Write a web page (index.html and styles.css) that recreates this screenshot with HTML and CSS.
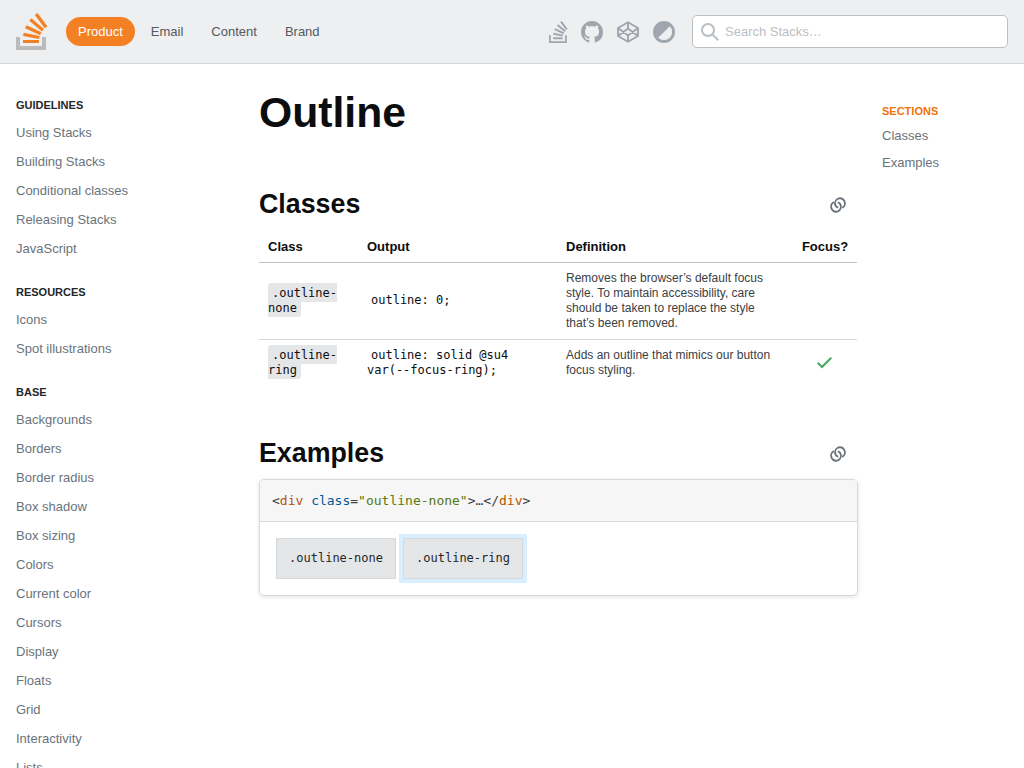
FILE: index.html
```html
<!DOCTYPE html>
<html lang="en">
<head>
<meta charset="utf-8">
<title>Outline - Stacks</title>
<link rel="stylesheet" href="styles.css">
</head>
<body>
<svg class="defs" width="0" height="0">
  <symbol id="icon-link" viewBox="0 0 18 18">
    <path d="M13.2 11.9A4.9 5.1 0 1 0 6.6 9.6Q7.4 11.3 9.3 11.6M4.8 6.1A4.9 5.1 0 1 0 11.4 8.4Q10.6 6.7 8.7 6.4" fill="none" stroke="currentColor" stroke-width="1.9"/>
  </symbol>
</svg>
<header class="topbar">
  <a class="logo"><svg width="32" height="37" viewBox="0 0 32 37"><path fill="#bcbbbb" d="M26 33v-9h4v13H0V24h4v9h22Z"/><path fill="#f48024" d="m21.5 0-2.7 2 9.9 13.3 2.7-2L21.5 0ZM26 18.4 13.3 7.8l2.1-2.5 12.7 10.6-2.1 2.5ZM9.1 15.2l15 7 1.4-3-15-7-1.4 3Zm14 10.79.68-2.95-16.1-3.35L7 23l16.1 2.99ZM23 30H7v-3h16v3Z"/></svg></a>
  <nav class="nav">
    <a class="nav-item selected">Product</a>
    <a class="nav-item">Email</a>
    <a class="nav-item">Content</a>
    <a class="nav-item">Brand</a>
  </nav>
  <div class="tools">
    <svg width="19" height="22" viewBox="0 0 31.95 37"><path d="M27 34v-10h3v13H0V24h3v10h24Z"/><path d="m21.5 0-2.7 2 9.9 13.3 2.7-2L21.5 0ZM26 18.4 13.3 7.8l2.1-2.5 12.7 10.6-2.1 2.5ZM9.1 15.2l15 7 1.4-3-15-7-1.4 3Zm14 10.79.68-2.95-16.1-3.35L7 23l16.1 2.99ZM23 30.5H7v-3h16v3Z"/></svg>
    <svg width="22" height="22" viewBox="0 0 16 16"><path d="M8 0C3.58 0 0 3.58 0 8c0 3.54 2.29 6.53 5.47 7.59.4.07.55-.17.55-.38 0-.19-.01-.82-.01-1.49-2.01.37-2.53-.49-2.69-.94-.09-.23-.48-.94-.82-1.13-.28-.15-.68-.52-.01-.53.63-.01 1.08.58 1.23.82.72 1.21 1.87.87 2.33.66.07-.52.28-.87.51-1.07-1.78-.2-3.64-.89-3.64-3.95 0-.87.31-1.59.82-2.15-.08-.2-.36-1.02.08-2.12 0 0 .67-.21 2.2.82.64-.18 1.32-.27 2-.27s1.36.09 2 .27c1.53-1.04 2.2-.82 2.2-.82.44 1.1.16 1.92.08 2.12.51.56.82 1.27.82 2.15 0 3.07-1.87 3.75-3.65 3.95.29.25.54.73.54 1.48 0 1.07-.01 1.93-.01 2.2 0 .21.15.46.55.38A8.01 8.01 0 0 0 16 8c0-4.42-3.58-8-8-8Z"/></svg>
    <svg width="22" height="22" viewBox="0 0 22 22"><path class="line" d="M11 1.2 21 7v8l-10 5.8L1 15V7zM11 1.2v6.3M11 14.5v6.3M1 7l10 7.5L21 7M1 15l10-7.5L21 15"/></svg>
    <svg width="22" height="22" viewBox="0 0 22 22"><path fill-rule="evenodd" d="M11 0a11 11 0 1 1 0 22 11 11 0 0 1 0-22Zm5.8 5.2L5.2 16.8A8.2 8.2 0 0 0 16.8 5.2Z"/></svg>
  </div>
  <label class="search">
    <svg width="18" height="18" viewBox="0 0 18 18"><path d="m18 16.5-5.14-5.18h-.35a7 7 0 1 0-1.19 1.19v.35L16.5 18l1.5-1.5ZM12 7A5 5 0 1 1 2 7a5 5 0 0 1 10 0Z"/></svg>
    <span>Search Stacks…</span>
  </label>
</header>
<div class="page">
  <nav class="sidebar">
    <h4>Guidelines</h4>
    <ul><li>Using Stacks</li><li>Building Stacks</li><li>Conditional classes</li><li>Releasing Stacks</li><li>JavaScript</li></ul>
    <h4>Resources</h4>
    <ul><li>Icons</li><li>Spot illustrations</li></ul>
    <h4>Base</h4>
    <ul><li>Backgrounds</li><li>Borders</li><li>Border radius</li><li>Box shadow</li><li>Box sizing</li><li>Colors</li><li>Current color</li><li>Cursors</li><li>Display</li><li>Floats</li><li>Grid</li><li>Interactivity</li><li>Lists</li></ul>
  </nav>
  <main class="content">
    <h1>Outline</h1>
    <section class="classes">
      <div class="heading"><h2>Classes</h2><svg width="18" height="18"><use href="#icon-link"/></svg></div>
      <table>
        <thead><tr><th class="c-class">Class</th><th class="c-output">Output</th><th class="c-def">Definition</th><th class="c-focus">Focus?</th></tr></thead>
        <tbody>
          <tr><td><code class="chip">.outline-none</code></td><td><code>outline: 0;</code></td><td class="def">Removes the browser’s default focus style. To maintain accessibility, care should be taken to replace the style that’s been removed.</td><td></td></tr>
          <tr><td><code class="chip">.outline-ring</code></td><td><code>outline: solid @su4 var(--focus-ring);</code></td><td class="def">Adds an outline that mimics our button focus styling.</td><td class="check"><svg width="18" height="18" viewBox="0 0 18 18"><path d="M16 4.41 14.59 3 6 11.59 2.41 8 1 9.41l5 5 10-10Z"/></svg></td></tr>
        </tbody>
      </table>
    </section>
    <section>
      <div class="heading"><h2>Examples</h2><svg width="18" height="18"><use href="#icon-link"/></svg></div>
      <div class="preview">
        <pre>&lt;<span class="tag">div</span> <span class="attr">class</span>=<span class="str">"outline-none"</span>&gt;…&lt;/<span class="tag">div</span>&gt;</pre>
        <div class="demo"><div class="box">.outline-none</div><div class="box ring">.outline-ring</div></div>
      </div>
    </section>
  </main>
  <aside class="toc">
    <h4>Sections</h4>
    <a>Classes</a>
    <a>Examples</a>
  </aside>
</div>
</body>
</html>
```
FILE: styles.css
```css
* { box-sizing: border-box; }
body { margin: 0; height: 768px; overflow: hidden; background: #fff; color: #0c0d0e; font: 13px/17px "Liberation Sans", Arial, sans-serif; }
h1, h2, h4, ul, pre { margin: 0; padding: 0; }
svg { display: block; fill: currentColor; flex: none; }
.defs { position: absolute; }

.topbar { display: flex; align-items: center; height: 64px; padding: 0 16px; background: #eeeff1; border-bottom: 1px solid #d6d9dc; }
.logo { margin-right: 18px; }
.nav { display: flex; gap: 4px; color: #535a60; }
.nav-item { padding: 6px 12px; border-radius: 1000px; }
.nav-item.selected { background: #f48024; color: #fff; }
.tools { display: flex; gap: 14px; margin-left: auto; margin-right: 17px; color: #9fa6ad; }
.tools svg:first-child { margin-right: -1px; }
.line { fill: none; stroke: currentColor; stroke-width: 1.9; stroke-linejoin: round; }
.search { display: flex; align-items: center; gap: 6px; width: 316px; height: 33px; padding-left: 8px; background: #fff; border: 1px solid #bbc0c4; border-radius: 5px; color: #bbc0c4; }

.page { display: flex; height: 704px; }
.sidebar { width: 259px; padding: 34px 16px 0; color: #6a737c; }
h4 { font-size: 11px; line-height: 15px; text-transform: uppercase; }
.sidebar h4 { color: #242729; }
.sidebar ul { list-style: none; margin: 5px 0 22px; }
.sidebar li { padding: 6px 0; }

.content { width: 599px; padding-top: 20px; }
h1 { font-size: 42.7px; line-height: 56px; margin-bottom: 46px; }
.heading { display: flex; align-items: center; justify-content: space-between; height: 36px; padding-right: 11px; color: #6a737c; }
.heading svg { margin-top: 2px; }
h2 { font-size: 26.8px; line-height: 36px; color: #0c0d0e; }
.classes { height: 249px; }

table { width: 598px; table-layout: fixed; border-collapse: collapse; font-size: 12px; line-height: 15px; margin-top: 8px; }
th { height: 32px; padding: 2px 8px 0 9px; font-size: 13px; text-align: left; border-bottom: 1px solid #bbc0c4; }
td { padding: 8px 7px 8px 9px; vertical-align: middle; border-bottom: 1px solid #d6d9dc; }
tr:last-child td { border-bottom: 0; }
.c-class { width: 99px; }
.c-output { width: 199px; }
.c-def { width: 235px; }
.c-focus { text-align: center; }
.def { color: #3b4045; }
code, pre, .box { font-family: "DejaVu Sans Mono", monospace; }
code { font-size: 12px; padding: 3px 4px 2px; }
.chip { background: #e4e6e8; border-radius: 3px; }
.check { padding-right: 9px; color: #48a868; }
.check svg { margin: auto; }

.preview { margin-top: 8px; border: 1px solid #d6d9dc; border-radius: 5px; box-shadow: 0 1px 4px rgba(12, 13, 14, .12); overflow: hidden; }
pre { height: 42px; padding: 12px; font-size: 13px; background: #f6f6f6; border-bottom: 1px solid #d6d9dc; color: #3b4045; }
.tag { color: #b75301; }
.attr { color: #015692; }
.str { color: #54790d; }
.demo { display: flex; gap: 7px; padding: 16px; }
.box { width: 120px; height: 41px; padding: 11px; font-size: 12px; text-align: center; color: #242729; background: #e4e6e8; border: 1px solid #d6d9dc; }
.ring { box-shadow: 0 0 0 4px #d9eeff; }

.toc { width: 166px; padding: 40px 0 0 24px; color: #6a737c; }
.toc h4 { color: #f2720c; margin-bottom: 8px; }
.toc a { display: block; margin-bottom: 10px; }
```
